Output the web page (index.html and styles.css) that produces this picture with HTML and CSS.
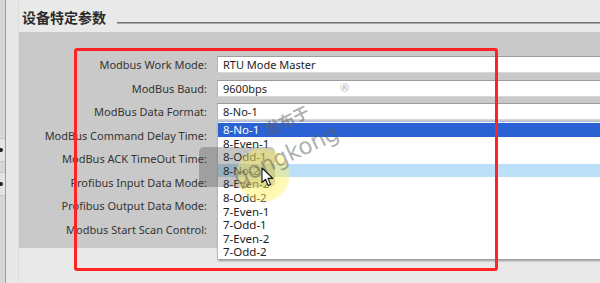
FILE: index.html
```
<!DOCTYPE html>
<html lang="zh">
<head>
<meta charset="utf-8">
<link rel="stylesheet" href="styles.css">
</head>
<body>
<div class="app">
  <div class="sidebar">
    <div class="side-edge">
      <span class="side-btn"><i></i></span>
      <span class="side-btn"><i></i></span>
    </div>
  </div>
  <div class="main">
    <div class="header">
      <h2 class="title">设备特定参数</h2>
      <div class="rule"></div>
    </div>
    <div class="panel">
      <div class="form">
        <label class="lbl">Modbus Work Mode:</label>
        <div class="field">RTU Mode Master</div>
        <label class="lbl">ModBus Baud:</label>
        <div class="field">9600bps</div>
        <label class="lbl">ModBus Data Format:</label>
        <div class="field">8-No-1</div>
        <label class="lbl">ModBus Command Delay Time:</label>
        <div class="field"></div>
        <label class="lbl">ModBus ACK TimeOut Time:</label>
        <div class="field"></div>
        <label class="lbl">Profibus Input Data Mode:</label>
        <div class="field"></div>
        <label class="lbl">Profibus Output Data Mode:</label>
        <div class="field"></div>
        <label class="lbl">Modbus Start Scan Control:</label>
        <div class="field"></div>
      </div>
    </div>
  </div>

  <ul class="dropdown">
    <li class="opt selected">8-No-1</li>
    <li class="opt">8-Even-1</li>
    <li class="opt">8-Odd-1</li>
    <li class="opt hover">8-No-2</li>
    <li class="opt">8-Even-2</li>
    <li class="opt">8-Odd-2</li>
    <li class="opt">7-Even-1</li>
    <li class="opt">7-Odd-1</li>
    <li class="opt">7-Even-2</li>
    <li class="opt">7-Odd-2</li>
  </ul>

  <div class="click-box"></div>
  <div class="glow"></div>
  <div class="wm wm-cn">发布于</div>
  <div class="wm wm-en">gongkong</div>
  <div class="wm wm-r">®</div>
  <svg class="cursor" width="14" height="20" viewBox="0 0 14 20">
    <path d="M1 1 L1 15.5 L4.5 12.3 L7.2 18.5 L9.6 17.4 L7 11.4 L11.8 11.4 Z" fill="#fff" stroke="#111" stroke-width="1.1" stroke-linejoin="round"/>
  </svg>
  <div class="annot"></div>
</div>
</body>
</html>
```

FILE: styles.css
```
* { box-sizing: border-box; }
html, body { margin: 0; padding: 0; }
body {
  width: 600px;
  height: 283px;
  overflow: hidden;
  background: #e9e9e9;
  font-family: "Noto Sans", "Open Sans", sans-serif;
  color: #333;
}
.app {
  position: relative;
  display: flex;
  width: 600px;
  height: 283px;
}
.sidebar {
  width: 19px;
  flex: none;
  display: flex;
  background: #e8e8e8;
  border-right: 1px solid #dcdcdc;
}
.side-edge {
  width: 6px;
  background: #d6d6d6;
  border-right: 1px solid #9c9c9c;
  display: flex;
  flex-direction: column;
  padding-top: 138px;
  gap: 10px;
}
.side-btn {
  height: 24px;
  background: #e4e4e4;
  border-top: 1px solid #c4c4c4;
  border-bottom: 1px solid #c4c4c4;
  display: flex;
  align-items: center;
}
.side-btn i {
  width: 3px;
  height: 4px;
  background: #222;
  border-radius: 0 2px 2px 0;
}
.main {
  flex: 1;
  display: flex;
  flex-direction: column;
}
.header {
  height: 32px;
  display: flex;
  align-items: flex-start;
  padding: 8px 0 0 3px;
}
.title {
  margin: 0;
  font-family: "Noto Sans CJK SC", sans-serif;
  font-size: 14px;
  line-height: 18px;
  font-weight: 700;
  color: #2b2b2b;
}
.rule {
  flex: 1;
  margin: 14px 0 0 11px;
  height: 2px;
  border-top: 1px solid #6e6e6e;
  border-bottom: 1px solid #a9a9a9;
}
.panel {
  height: 216px;
  margin-right: 2px;
  background: #c9c9c9;
  padding-top: 24px;
}
.form {
  display: grid;
  grid-template-columns: 188px 383px;
  grid-auto-rows: 17px;
  row-gap: 6.5px;
  column-gap: 10px;
}
.lbl {
  text-align: right;
  font-size: 11px;
  line-height: 17px;
  white-space: nowrap;
  color: #343434;
}
.field {
  background: #fff;
  border-top: 1px solid #9d9d9d;
  border-left: 1px solid #b4b4b4;
  border-bottom: 1px solid #d8d8d8;
  font-size: 11px;
  line-height: 15px;
  padding-left: 5px;
  color: #1e1e1e;
}
.dropdown {
  position: absolute;
  left: 217px;
  top: 121px;
  width: 383px;
  height: 138px;
  margin: 0;
  padding: 1px 0 0 0;
  list-style: none;
  background: #fff;
  border-top: 1px solid #a8bedc;
  border-left: 1px solid #b9b9b9;
  box-shadow: 1px 2px 2px rgba(0,0,0,0.35);
}
.opt {
  height: 13.6px;
  line-height: 13.6px;
  font-size: 11.5px;
  padding-left: 5px;
  color: #222;
}
.opt.selected {
  background: #2b62d3;
  color: #fff;
}
.opt.hover {
  background: #bce0f8;
}
.click-box {
  position: absolute;
  left: 199px;
  top: 147px;
  width: 76px;
  height: 40px;
  border-radius: 5px;
  background: rgba(70,70,70,0.32);
}
.glow {
  position: absolute;
  left: 236px;
  top: 148px;
  width: 54px;
  height: 54px;
  border-radius: 50%;
  background: radial-gradient(circle, rgba(255,240,90,0.55) 0%, rgba(255,240,90,0.45) 60%, rgba(255,240,90,0) 100%);
}
.wm {
  position: absolute;
  color: rgba(95,95,95,0.5);
  white-space: nowrap;
  transform-origin: 50% 50%;
}
.wm-cn {
  left: 262px;
  top: 110px;
  width: 48px;
  text-align: center;
  font-family: "Noto Sans CJK SC", sans-serif;
  font-size: 16px;
  line-height: 20px;
  font-weight: 700;
  transform: rotate(-25deg);
}
.wm-en {
  left: 225px;
  top: 141px;
  width: 122px;
  text-align: center;
  font-family: "DejaVu Sans", sans-serif;
  font-size: 23px;
  line-height: 28px;
  font-weight: 400;
  transform: rotate(-25deg);
}
.wm-r {
  left: 340px;
  top: 80px;
  font-size: 11px;
}
.cursor {
  position: absolute;
  left: 261px;
  top: 167px;
}
.annot {
  position: absolute;
  left: 74px;
  top: 48px;
  width: 424px;
  height: 223px;
  border: 3px solid #ff2323;
  border-radius: 3px;
  pointer-events: none;
}
```
